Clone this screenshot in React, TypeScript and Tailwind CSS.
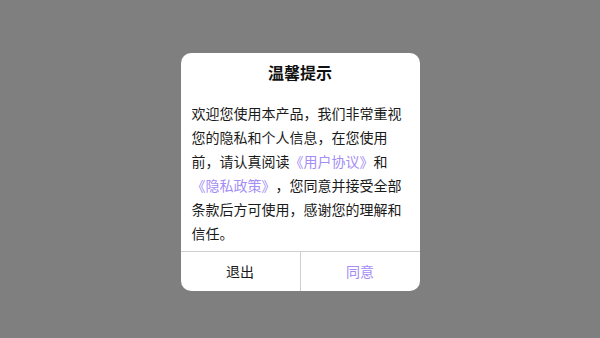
export default function App() {
  const font = { fontFamily: '"Noto Sans CJK SC", "Noto Sans", sans-serif' };
  return (
    <div className="w-[600px] h-[338px] bg-[#7f7f7f] flex justify-center items-center" style={font}>
      <div className="w-[239px] mt-[5px] bg-white rounded-[10px] overflow-hidden [text-spacing-trim:space-all]">
        <div className="pt-[8px] text-center text-[16px] leading-[22px] font-bold text-[#111]">温馨提示</div>
        <div className="px-[11px] pt-[18px] pb-[6px] text-[14px] leading-[24px] text-[#1a1a1a]">
          欢迎您使用本产品，我们非常重视您的隐私和个人信息，在您使用前，请认真阅读
          <span className="text-[#a48df5]">《用户协议》</span>和
          <span className="text-[#a48df5]">《隐私政策》</span>，您同意并接受全部条款后方可使用，感谢您的理解和信任。
        </div>
        <div className="flex border-t border-[#cfcfcf] h-[40px] text-[14px]">
          <button className="flex-1 flex items-center justify-center text-[#1a1a1a]">退出</button>
          <div className="w-px bg-[#cfcfcf]" />
          <button className="flex-1 flex items-center justify-center text-[#a48df5]">同意</button>
        </div>
      </div>
    </div>
  );
}
